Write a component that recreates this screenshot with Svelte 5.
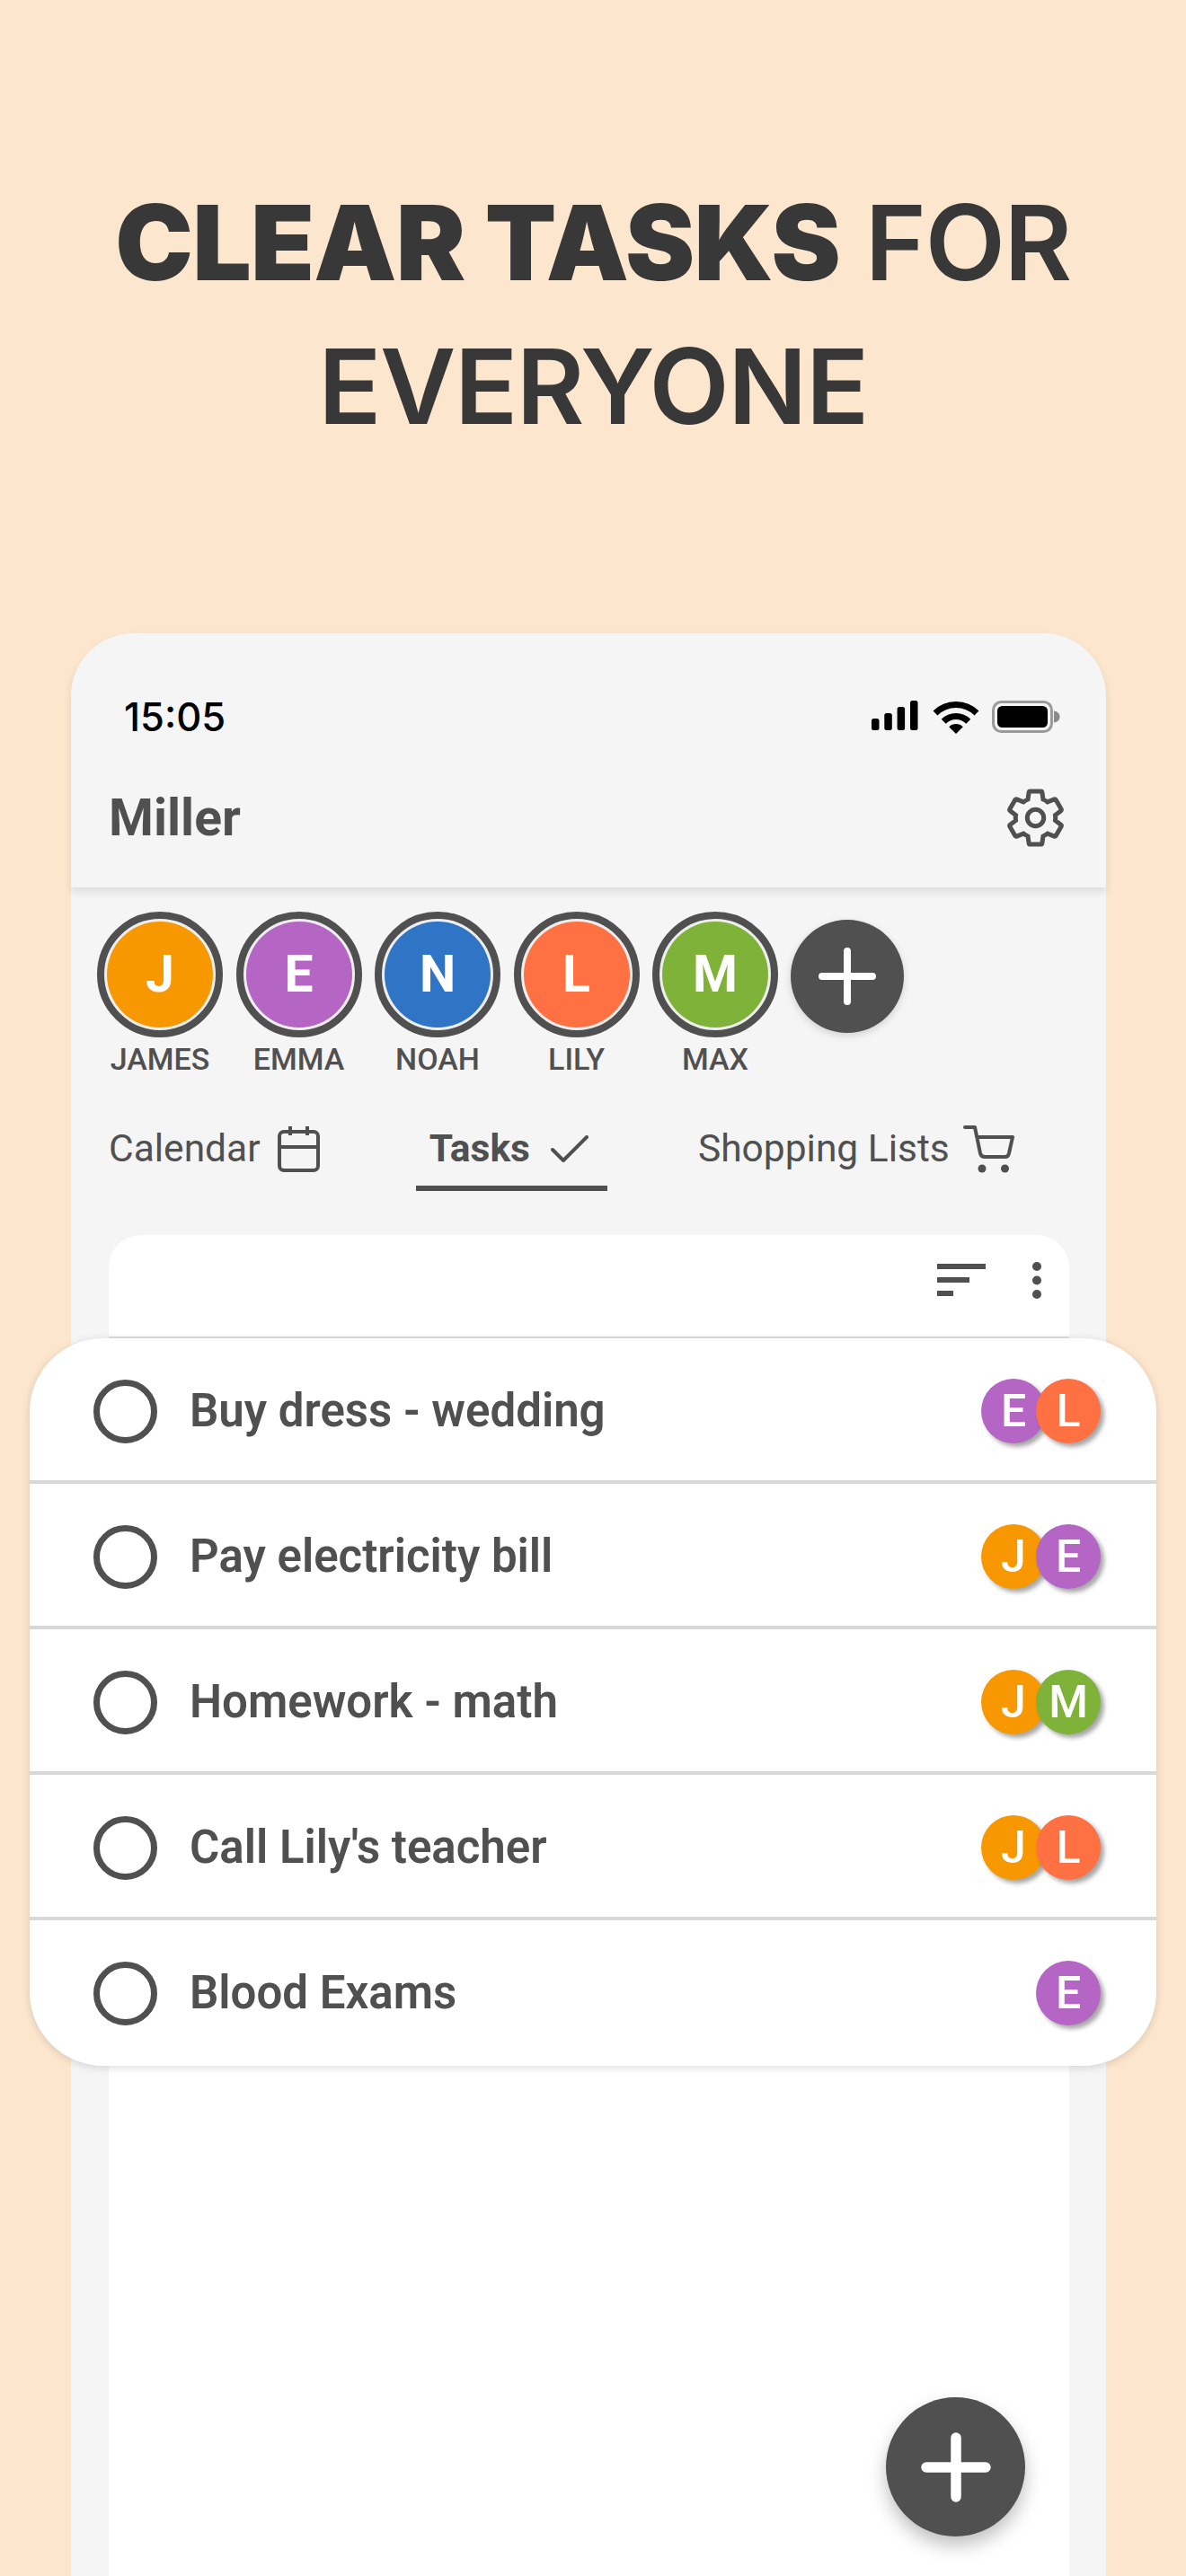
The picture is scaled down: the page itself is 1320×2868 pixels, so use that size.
<script>
  const people = [
    { name: 'JAMES', letter: 'J', tone: 'orange' },
    { name: 'EMMA', letter: 'E', tone: 'purple' },
    { name: 'NOAH', letter: 'N', tone: 'blue' },
    { name: 'LILY', letter: 'L', tone: 'coral' },
    { name: 'MAX', letter: 'M', tone: 'green' }
  ];
  const tones = { J: 'orange', E: 'purple', N: 'blue', L: 'coral', M: 'green' };
  const tasks = [
    { title: 'Buy dress - wedding', who: ['E', 'L'] },
    { title: 'Pay electricity bill', who: ['J', 'E'] },
    { title: 'Homework - math', who: ['J', 'M'] },
    { title: "Call Lily's teacher", who: ['J', 'L'] },
    { title: 'Blood Exams', who: ['E'] }
  ];
</script>

<div class="page">
  <h1 class="headline">
    <span class="line"><strong>CLEAR TASKS</strong> FOR</span>
    <span class="line">EVERYONE</span>
  </h1>

  <div class="phone">
    <div class="top">
      <div class="status">
        <span class="time">15:05</span>
        <div class="status-icons">
          <svg width="52" height="33" viewBox="0 0 52 33" fill="#000">
            <rect x="0" y="20" width="8.5" height="13" rx="2.5" />
            <rect x="14.3" y="14" width="8.5" height="19" rx="2.5" />
            <rect x="28.6" y="7" width="8.5" height="26" rx="2.5" />
            <rect x="43" y="0" width="8.5" height="33" rx="2.5" />
          </svg>
          <svg class="wifi" width="52" height="38" viewBox="0 0 52 38">
            <path d="M3 14A32.5 32.5 0 0 1 49 14" fill="none" stroke="#000" stroke-width="7" />
            <path d="M12.2 23.2A19.5 19.5 0 0 1 39.8 23.2" fill="none" stroke="#000" stroke-width="7" />
            <path d="M26 37L18.2 29.2A11 11 0 0 1 33.8 29.2Z" fill="#000" />
          </svg>
          <svg class="battery" width="76" height="36" viewBox="0 0 76 36">
            <rect x="1.5" y="1.5" width="65" height="33" rx="9" fill="none" stroke="#9a9a9a" stroke-width="3" />
            <rect x="6" y="6" width="56" height="24" rx="5.5" fill="#000" />
            <path d="M69 11.500c4 .5 6.500 3 6.500 6.500s-2.500 6-6.500 6.500Z" fill="#8a8a8a" />
          </svg>
        </div>
      </div>
      <div class="title-row">
        <span class="family">Miller</span>
        <svg class="gear" width="71" height="71" viewBox="0 0 24 24" fill="none" stroke="#505050" stroke-width="1.7">
          <path d="M19.43 12.98c.04-.32.07-.64.07-.98 0-.34-.03-.66-.07-.98l2.11-1.65c.19-.15.24-.42.12-.64l-2-3.46c-.09-.16-.26-.25-.44-.25-.06 0-.12.01-.17.03l-2.49 1c-.52-.4-1.08-.73-1.69-.98l-.38-2.65C14.46 2.18 14.25 2 14 2h-4c-.25 0-.46.18-.49.42l-.38 2.65c-.61.25-1.17.59-1.69.98l-2.49-1c-.06-.02-.12-.03-.18-.03-.17 0-.34.09-.43.25l-2 3.46c-.13.22-.07.49.12.64l2.11 1.65c-.04.32-.07.65-.07.98 0 .33.03.66.07.98l-2.11 1.65c-.19.15-.24.42-.12.64l2 3.46c.09.16.26.25.44.25.06 0 .12-.01.17-.03l2.49-1c.52.4 1.08.73 1.69.98l.38 2.65c.03.24.24.42.49.42h4c.25 0 .46-.18.49-.42l.38-2.65c.61-.25 1.17-.59 1.69-.98l2.49 1c.06.02.12.03.18.03.17 0 .34-.09.43-.25l2-3.46c.12-.22.07-.49-.12-.64l-2.11-1.65z" />
          <circle cx="12" cy="12" r="3.100" />
        </svg>
      </div>
    </div>

    <div class="people">
      {#each people as p}
        <div class="person">
          <div class="ring"><div class="face {p.tone}">{p.letter}</div></div>
          <span class="name">{p.name}</span>
        </div>
      {/each}
      <div class="add">
        <svg width="64" height="64" viewBox="0 0 64 64" stroke="#fff" stroke-width="8" stroke-linecap="round">
          <path d="M4 32H60M32 4V60" />
        </svg>
      </div>
    </div>

    <div class="tabs">
      <div class="tab calendar">
        <span>Calendar</span>
        <svg width="47" height="51" viewBox="0 0 47 51" fill="none" stroke="#505050" stroke-width="4">
          <rect x="2" y="6" width="43" height="43" rx="5" />
          <path d="M2 23H45M14 0V10M33 0V10" />
        </svg>
      </div>
      <div class="tab active">
        <span>Tasks</span>
        <svg width="42" height="30" viewBox="0 0 42 30" fill="none" stroke="#505050" stroke-width="4" stroke-linecap="round" stroke-linejoin="round">
          <path d="M2 16L14 28L40 2" />
        </svg>
      </div>
      <div class="tab shopping">
        <span>Shopping Lists</span>
        <svg width="57" height="54" viewBox="0 0 57 54" fill="none" stroke="#505050" stroke-width="4" stroke-linecap="round" stroke-linejoin="round">
          <path d="M2 3H13L19 32Q20 36 24 36H47Q50 36 51 32L55 14H15" />
          <circle cx="21" cy="49" r="4.500" fill="#505050" stroke="none" />
          <circle cx="46.500" cy="49" r="4.500" fill="#505050" stroke="none" />
        </svg>
      </div>
    </div>

    <div class="board">
      <div class="toolbar">
        <svg width="54" height="36" viewBox="0 0 54 36" fill="#505050">
          <rect x="0" y="0" width="54" height="6" />
          <rect x="0" y="15" width="36" height="6" />
          <rect x="0" y="30" width="18" height="6" />
        </svg>
        <svg class="dots" width="10" height="41" viewBox="0 0 10 41" fill="#505050">
          <circle cx="5" cy="5" r="5" />
          <circle cx="5" cy="20.500" r="5" />
          <circle cx="5" cy="36" r="5" />
        </svg>
      </div>

      <div class="tasks">
        {#each tasks as t}
          <div class="task">
            <span class="check"></span>
            <span class="label">{t.title}</span>
            <div class="who">
              {#each t.who as w}
                <span class="chip {tones[w]}">{w}</span>
              {/each}
            </div>
          </div>
        {/each}
      </div>

      <div class="fab">
        <svg width="80" height="80" viewBox="0 0 80 80" stroke="#fff" stroke-width="11.500" stroke-linecap="round">
          <path d="M7 40H73M40 7V73" />
        </svg>
      </div>
    </div>
  </div>
</div>

<style>
  :global(body) {
    margin: 0;
    background: #fce6ce;
  }
  .page {
    width: 1320px;
    height: 2868px;
    overflow: hidden;
    display: flex;
    flex-direction: column;
    background: #fce6ce;
    font-family: Roboto, sans-serif;
    color: #505050;
  }
  .headline {
    margin: 0;
    padding-top: 190px;
    font-family: Inter, sans-serif;
    font-size: 116px;
    line-height: 160px;
    font-weight: 600;
    color: #383838;
    text-align: center;
    letter-spacing: -1.4px;
  }
  .headline strong {
    font-weight: 900;
    letter-spacing: -0.8px;
  }
  .line {
    display: block;
    white-space: nowrap;
  }
  .phone {
    flex: 1;
    margin: 195px 89px 0 79px;
    background: #f5f5f5;
    border-radius: 70px 70px 0 0;
    display: flex;
    flex-direction: column;
    min-height: 0;
  }
  .top {
    height: 283px;
    box-sizing: border-box;
    border-radius: 70px 70px 0 0;
    background: #f5f5f5;
    box-shadow: 0 5px 10px rgba(0, 0, 0, 0.1);
  }
  .status {
    height: 40px;
    padding: 73px 51px 0 59px;
    display: flex;
    align-items: center;
    justify-content: space-between;
  }
  .time {
    font-family: Inter, sans-serif;
    font-size: 43.5px;
    font-weight: 500;
    line-height: 40px;
    color: #000;
  }
  .status-icons {
    display: flex;
    align-items: flex-start;
    gap: 16px;
    height: 38px;
    margin-top: 2px;
  }
  .status-icons svg {
    display: block;
  }
  .status-icons .battery {
    margin-left: -2px;
  }
  .title-row {
    height: 80px;
    margin-top: 53px;
    padding: 0 43px 0 42px;
    display: flex;
    align-items: center;
    justify-content: space-between;
  }
  .family {
    font-size: 57px;
    font-weight: 700;
    line-height: 80px;
  }
  .gear {
    display: block;
    margin-top: -2px;
  }
  .people {
    display: flex;
    align-items: flex-start;
    gap: 14.5px;
    padding: 27px 0 0 29px;
  }
  .person {
    width: 140px;
    display: flex;
    flex-direction: column;
    align-items: center;
    gap: 4px;
  }
  .ring {
    width: 140px;
    height: 140px;
    box-sizing: border-box;
    border: 8px solid #505050;
    border-radius: 50%;
    padding: 3px;
    background: #eee;
  }
  .face {
    width: 118px;
    height: 118px;
    border-radius: 50%;
    color: #fff;
    font-size: 57px;
    font-weight: 700;
    line-height: 118px;
    text-align: center;
  }
  .name {
    font-size: 34px;
    font-weight: 500;
    line-height: 40px;
  }
  .add {
    width: 126px;
    height: 126px;
    margin: 9px 0 0 -1px;
    border-radius: 50%;
    background: #505050;
    box-shadow: 0 3px 8px rgba(0, 0, 0, 0.15);
    display: flex;
    align-items: center;
    justify-content: center;
  }
  .tabs {
    display: flex;
    align-items: flex-start;
    margin-top: 54px;
    padding-left: 42px;
  }
  .tab {
    display: flex;
    align-items: center;
    height: 52px;
    font-size: 42.5px;
    line-height: 52px;
    white-space: nowrap;
  }
  .calendar {
    gap: 19px;
  }
  .active {
    margin-left: 107px;
    padding: 0 21px 15px 15px;
    border-bottom: 6px solid #505050;
    font-weight: 700;
    gap: 23px;
  }
  .shopping {
    margin-left: 101px;
    gap: 15px;
  }
  .board {
    flex: 1;
    position: relative;
    margin: 49px 41px 0 42px;
    background: #fff;
    border-radius: 36px 36px 0 0;
  }
  .toolbar {
    height: 113px;
    border-bottom: 2px solid #ddd;
    display: flex;
    align-items: flex-start;
    justify-content: flex-end;
    gap: 52px;
    padding-right: 31px;
  }
  .toolbar svg {
    margin-top: 32px;
  }
  .toolbar .dots {
    margin-top: 30px;
  }
  .tasks {
    margin: 0 -97px 0 -88px;
    background: #fff;
    border-radius: 82px;
    box-shadow: 0 2px 10px rgba(0, 0, 0, 0.14);
    position: relative;
  }
  .task {
    height: 162px;
    box-sizing: border-box;
    padding: 4px 62px 0 71px;
    border-bottom: 4px solid #d8d8d8;
    display: flex;
    align-items: center;
  }
  .task:last-child {
    border-bottom-color: transparent;
  }
  .check {
    width: 71px;
    height: 71px;
    box-sizing: border-box;
    border: 7px solid #505050;
    border-radius: 50%;
    flex: none;
  }
  .label {
    margin: -1px 0 0 36px;
    font-size: 51px;
    font-weight: 600;
    line-height: 60px;
    flex: 1;
    white-space: nowrap;
  }
  .who {
    display: flex;
  }
  .chip {
    width: 72px;
    height: 72px;
    border-radius: 50%;
    color: #fff;
    font-family: Roboto, sans-serif;
    font-size: 50px;
    font-weight: 500;
    line-height: 72px;
    text-align: center;
    box-shadow: 4px 4px 5px rgba(0, 0, 0, 0.35);
    position: relative;
  }
  .chip + .chip {
    margin-left: -11px;
  }
  .orange { background: #f79800; }
  .purple { background: #b565c4; }
  .blue { background: #3074c6; }
  .coral { background: #ff7043; }
  .green { background: #7fb239; }
  .fab {
    position: absolute;
    right: 49px;
    bottom: 44px;
    width: 155px;
    height: 155px;
    border-radius: 50%;
    background: #505050;
    box-shadow: 0 10px 20px rgba(0, 0, 0, 0.25);
    display: flex;
    align-items: center;
    justify-content: center;
  }
</style>
